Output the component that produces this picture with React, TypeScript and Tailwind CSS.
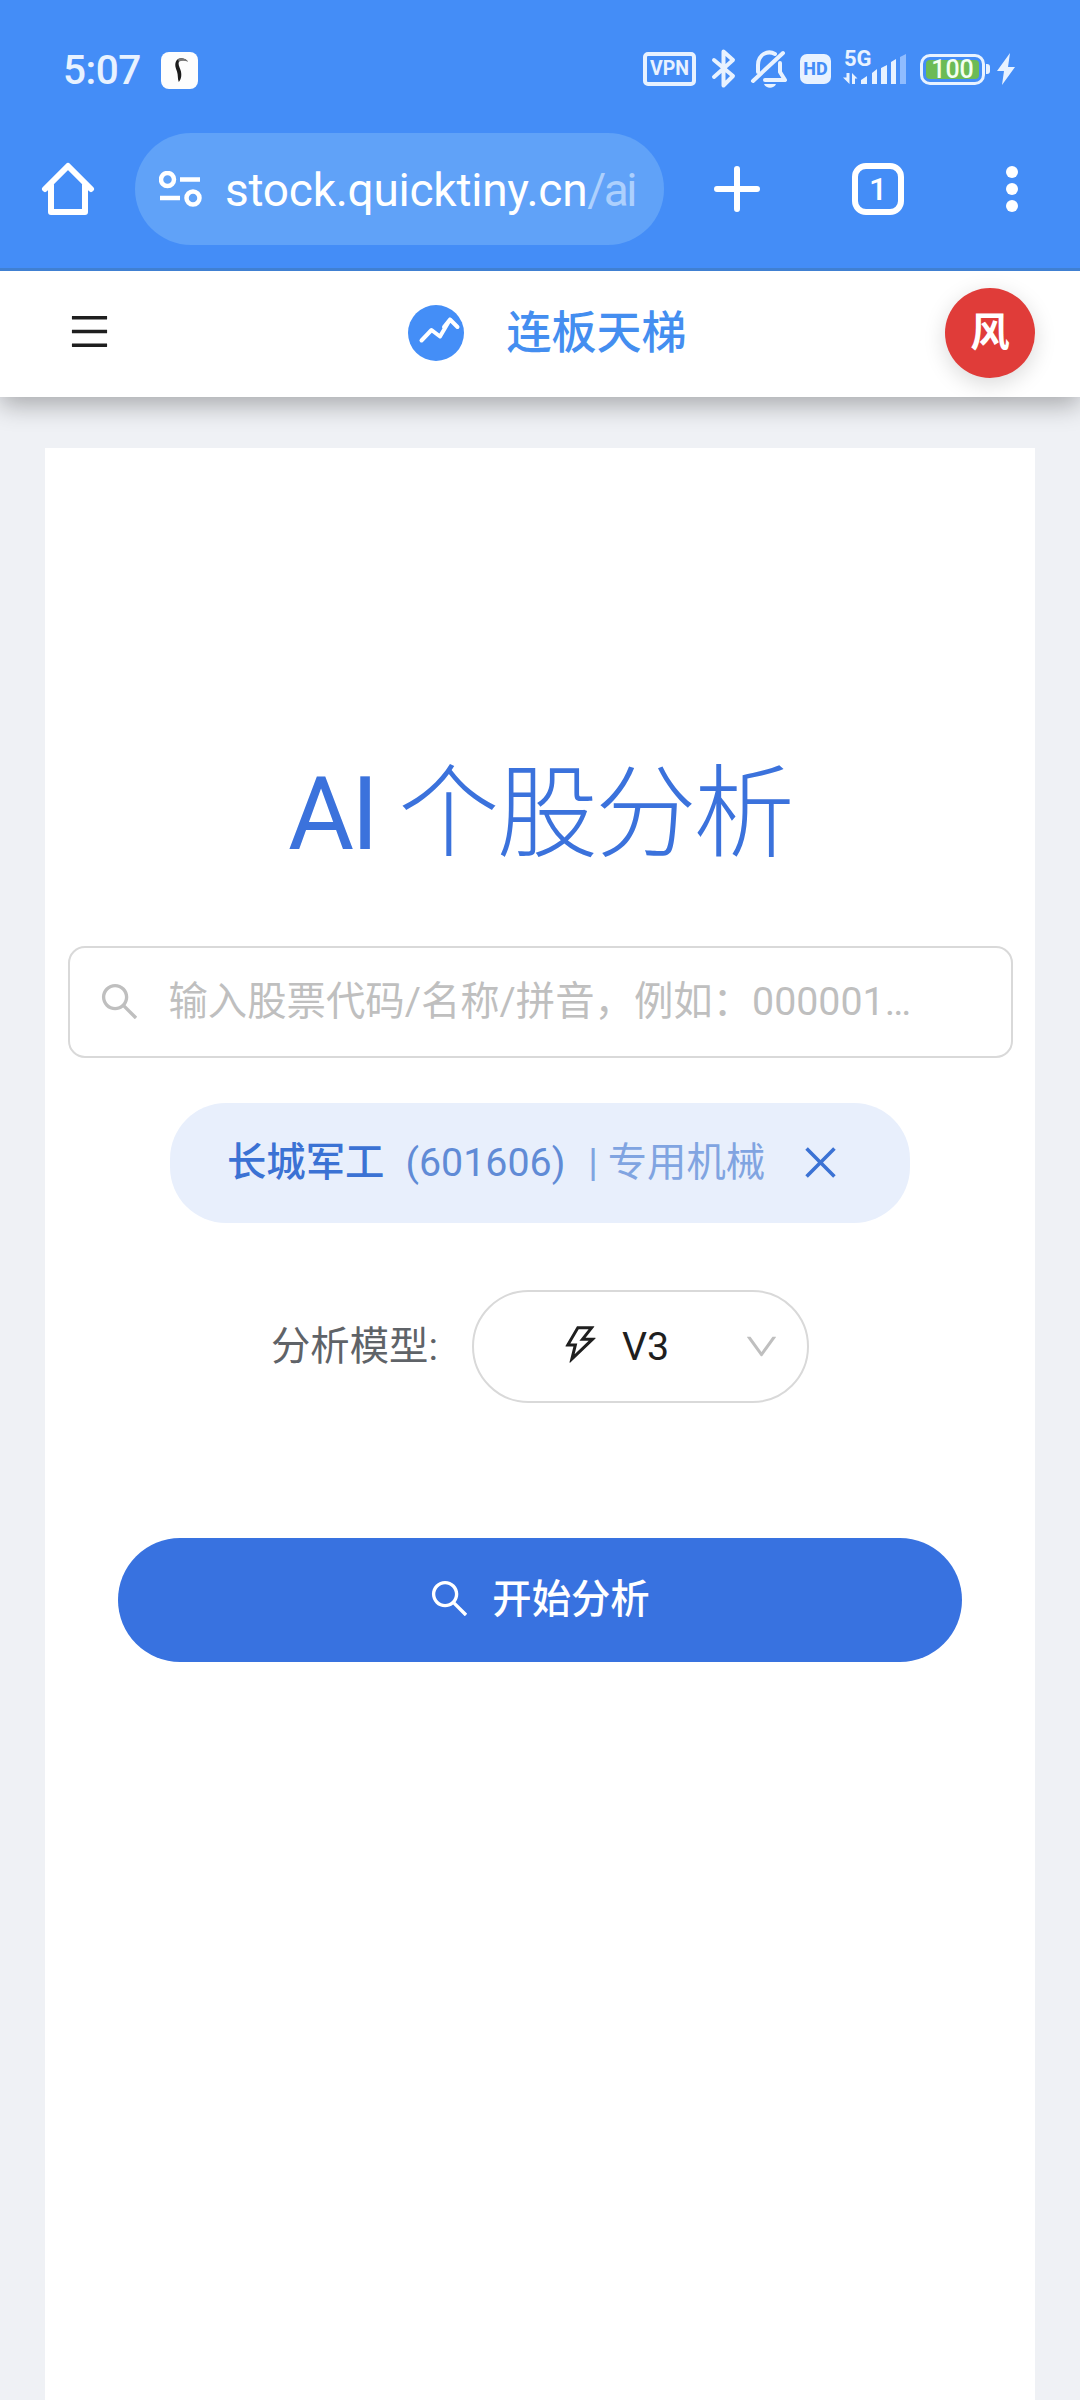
import { AiOutlineClose, AiOutlineDown, AiOutlineMenu, AiOutlineSearch, AiOutlineThunderbolt } from 'react-icons/ai';

function StatusBar() {
  return (
    <div className="flex h-[133px] items-start justify-between pl-[63px] pr-[64px] pt-[49px] text-[#e8f2ff]">
      <div className="flex h-[42px] items-center">
        <span className="w-[98px] text-[40.5px] font-medium leading-[40px] tracking-[-0.5px]">5:07</span>
        <svg className="h-[37px] w-[37px]" viewBox="0 0 37 37">
          <rect width="37" height="37" rx="8" fill="#fdfdfd" />
          <path d="M27 9.500C24 6 18 5 15.500 8.500c-2.500 4-.5 8 .5 11 1.200 4 .5 7 1.800 10.500C20.500 27 21 22 19.500 18c-1.500-4-2.500-6-1.500-8.500 1.500-1.500 5-2 9 0z" fill="#1b1b1b" />
          <path d="M27 9.500C24 6 19 5.300 17 7.500l.8 2.300C20 8.500 23 8.300 27 9.500z" fill="#777" />
        </svg>
      </div>

      <div className="flex h-[40px] items-center">
        <div className="flex h-[34px] w-[53px] items-center justify-center rounded-[5px] border-4 border-current text-[19.5px] font-bold leading-none">
          VPN
        </div>
        <svg className="ml-[15px] h-[40px] w-[26px]" viewBox="0 0 26 40" fill="none" stroke="currentColor" strokeWidth="4" strokeLinecap="round" strokeLinejoin="round">
          <path d="M3 11l19 16-9.500 9.500V2.500L22 11 3 28" />
        </svg>
        <svg className="ml-[13px] h-[40px] w-[38px]" viewBox="0 0 38 40" fill="none" stroke="currentColor" strokeWidth="4" strokeLinecap="round" strokeLinejoin="round">
          <path d="M3 32L33 4M8 23v-7C8 5 18 1 25 5M30 14v9l5 8H15" />
          <path d="M14 35h12c-2 5-10 5-12 0z" fill="currentColor" stroke="none" />
        </svg>
        <div className="ml-[12px] flex h-[30px] w-[31px] items-center justify-center rounded-[7px] bg-[#e8f2ff] text-[18px] font-extrabold leading-none text-[#448df7]">
          HD
        </div>
        <div className="ml-[11px] flex h-[40px] w-[67px] flex-col">
          <span className="h-[17px] pl-[2px] text-[22px] font-bold leading-[20px]">5G</span>
          <svg className="mt-[-15px] h-[38px] w-[66px]" viewBox="0 2 66 38" fill="currentColor">
            <path d="M4.500 24h3v11L1 28.500h3.500zM10 35V24l5.500 5.500H13V35z" />
            <path d="M19 35v-4l6-4v8zM30 35V24l5-4v15zM39 35V19l6-3v19zM49 35V13l5-3v25z" />
            <path d="M58 35V8l6-3v30z" fill="#8fbcff" />
          </svg>
        </div>
        <div className="ml-[11px] flex h-[31px] w-[65px] rounded-[10px] border-[3px] border-current p-[3px]">
          <div className="flex flex-1 items-center justify-center rounded-[4px] bg-[#6cbb55] text-[25px] font-medium leading-none text-[#f3fff0]">
            100
          </div>
        </div>
        <div className="ml-px h-[10px] w-[4px] rounded-r-[3px] bg-[#e8f2ff]" />
        <svg className="ml-[7px] h-[32px] w-[19px]" viewBox="0 0 19 32" fill="currentColor">
          <path d="M13 0L0 18h7L5 32l13-18h-7z" />
        </svg>
      </div>
    </div>
  );
}

function BrowserToolbar() {
  return (
    <div className="flex h-[112px] items-center text-white">
      <svg className="ml-[41px] h-[54px] w-[54px]" viewBox="0 0 54 54" fill="none" stroke="currentColor" strokeWidth="6" strokeLinecap="round" strokeLinejoin="round">
        <path d="M4 27L27 4l23 23M10 23v27h34V23" />
      </svg>
      <div className="ml-[40px] flex h-[112px] w-[529px] items-center rounded-full bg-[#60a2f8] pl-[24px]">
        <svg className="h-[36px] w-[43px]" viewBox="0 0 43 36" fill="none" stroke="currentColor" strokeWidth="4.500">
          <circle cx="8.500" cy="8.500" r="6.500" />
          <path d="M21 8.500h20M1 27h20" />
          <circle cx="34" cy="27" r="6.500" />
        </svg>
        <span className="ml-[23px] mt-[2px] whitespace-nowrap text-[46px] leading-[60px] tracking-[-0.25px]">
          stock.quicktiny.cn<span className="tracking-[-2.5px] text-[#add0fd]">/ai</span>
        </span>
      </div>
      <svg className="ml-[50px] h-[46px] w-[46px]" viewBox="0 0 46 46" stroke="currentColor" strokeWidth="6" strokeLinecap="round">
        <path d="M23 3v40M3 23h40" />
      </svg>
      <div className="ml-[92px] flex h-[52px] w-[52px] items-center justify-center rounded-[14px] border-[6px] border-white text-[32px] font-medium leading-none">
        1
      </div>
      <svg className="ml-[101px] h-[46px] w-[14px]" viewBox="0 0 14 46" fill="currentColor">
        <circle cx="7" cy="6" r="6" />
        <circle cx="7" cy="23" r="6" />
        <circle cx="7" cy="40" r="6" />
      </svg>
    </div>
  );
}

function SiteHeader() {
  return (
    <header className="relative flex h-[126px] items-center justify-between bg-white pl-[67px] pr-[45px] shadow-[0_8px_24px_rgba(0,0,0,0.3)]">
      <AiOutlineMenu className="mb-[5px] h-[45px] w-[45px] text-[#1f1f1f]" />
      <div className="ml-[38px] flex items-center">
        <svg className="mb-[2px] h-[56px] w-[56px]" viewBox="0 0 56 56">
          <circle cx="28" cy="28" r="28" fill="#448ef7" />
          <path d="M13.500 35.500l10-10.500 8.500 6.500L42 14.500l7.500 7.500M36 22l6-7.500" fill="none" stroke="#fff" strokeWidth="4" strokeLinecap="round" strokeLinejoin="round" />
        </svg>
        <span className="ml-[42px] text-[45px] font-medium leading-[60px] text-[#448ef0]">连板天梯</span>
      </div>
      <div className="mb-[3px] flex h-[90px] w-[90px] items-center justify-center rounded-full bg-[#e03c39] text-[39.375px] font-bold text-white shadow-[0_6px_22px_rgba(0,0,0,0.15)]">
        风
      </div>
    </header>
  );
}

export default function App() {
  return (
    <div className="flex h-[2400px] w-[1080px] flex-col overflow-hidden bg-[#eff1f5] font-[Roboto,'Noto_Sans_CJK_SC',sans-serif]">
      <div className="relative z-10 h-[271px] shrink-0 border-b-[3px] border-[#4080d2] bg-[#448df7]">
        <StatusBar />
        <BrowserToolbar />
      </div>
      <SiteHeader />

      <main className="mx-[45px] mt-[51px] flex flex-1 flex-col items-center bg-white pt-[297px]">
        <h1 className="flex h-[140px] items-center whitespace-pre text-[101.25px] leading-[140px] tracking-[-2.8px] text-[#3b72dc]">
          AI <span className="font-light">个股分析</span>
        </h1>

        <div className="mt-[61px] flex h-[112px] w-[945px] items-center rounded-[17px] border-2 border-[#d9d9d9] pl-[27px] text-[#bfbfbf]">
          <AiOutlineSearch className="mb-[2px] h-[45px] w-[45px]" />
          <span className="ml-[27px] whitespace-nowrap text-[39.375px] leading-[60px]">
            输入股票代码/名称/拼音，例如：000001…
          </span>
        </div>

        <div className="mt-[45px] flex h-[120px] w-[740px] items-center rounded-[56px] bg-[#e8effc] pl-[57px] text-[39.375px] leading-[60px] text-[#3b72d4]">
          <span className="font-medium">长城军工</span>
          <span className="ml-[21px] text-[#608bd6]">(601606)</span>
          <span className="ml-[23px] text-[#80a4e1]">| 专用机械</span>
          <AiOutlineClose className="mb-[2px] ml-[33px] h-[45px] w-[45px]" />
        </div>

        <div className="mt-[67px] flex h-[113px] items-center text-[39.375px] leading-[60px]">
          <span className="text-[#5f6368]">分析模型:</span>
          <div className="ml-[34px] flex h-[113px] w-[337px] items-center rounded-full border-2 border-[#d9d9d9] pl-[84px] text-[#1f1f1f]">
            <AiOutlineThunderbolt className="mb-[5px] h-[45px] w-[45px]" />
            <span className="ml-[19px]">V3</span>
            <AiOutlineDown className="ml-[73px] h-[39px] w-[39px] text-[#bfbfbf]" />
          </div>
        </div>

        <button className="mt-[135px] flex h-[124px] w-[844px] items-center justify-center rounded-full bg-[#3872e0] pr-[3px] text-[39.375px] leading-[60px] text-white">
          <AiOutlineSearch className="mb-[3px] h-[45px] w-[45px]" />
          <span className="ml-[20px] font-medium">开始分析</span>
        </button>
      </main>
    </div>
  );
}
